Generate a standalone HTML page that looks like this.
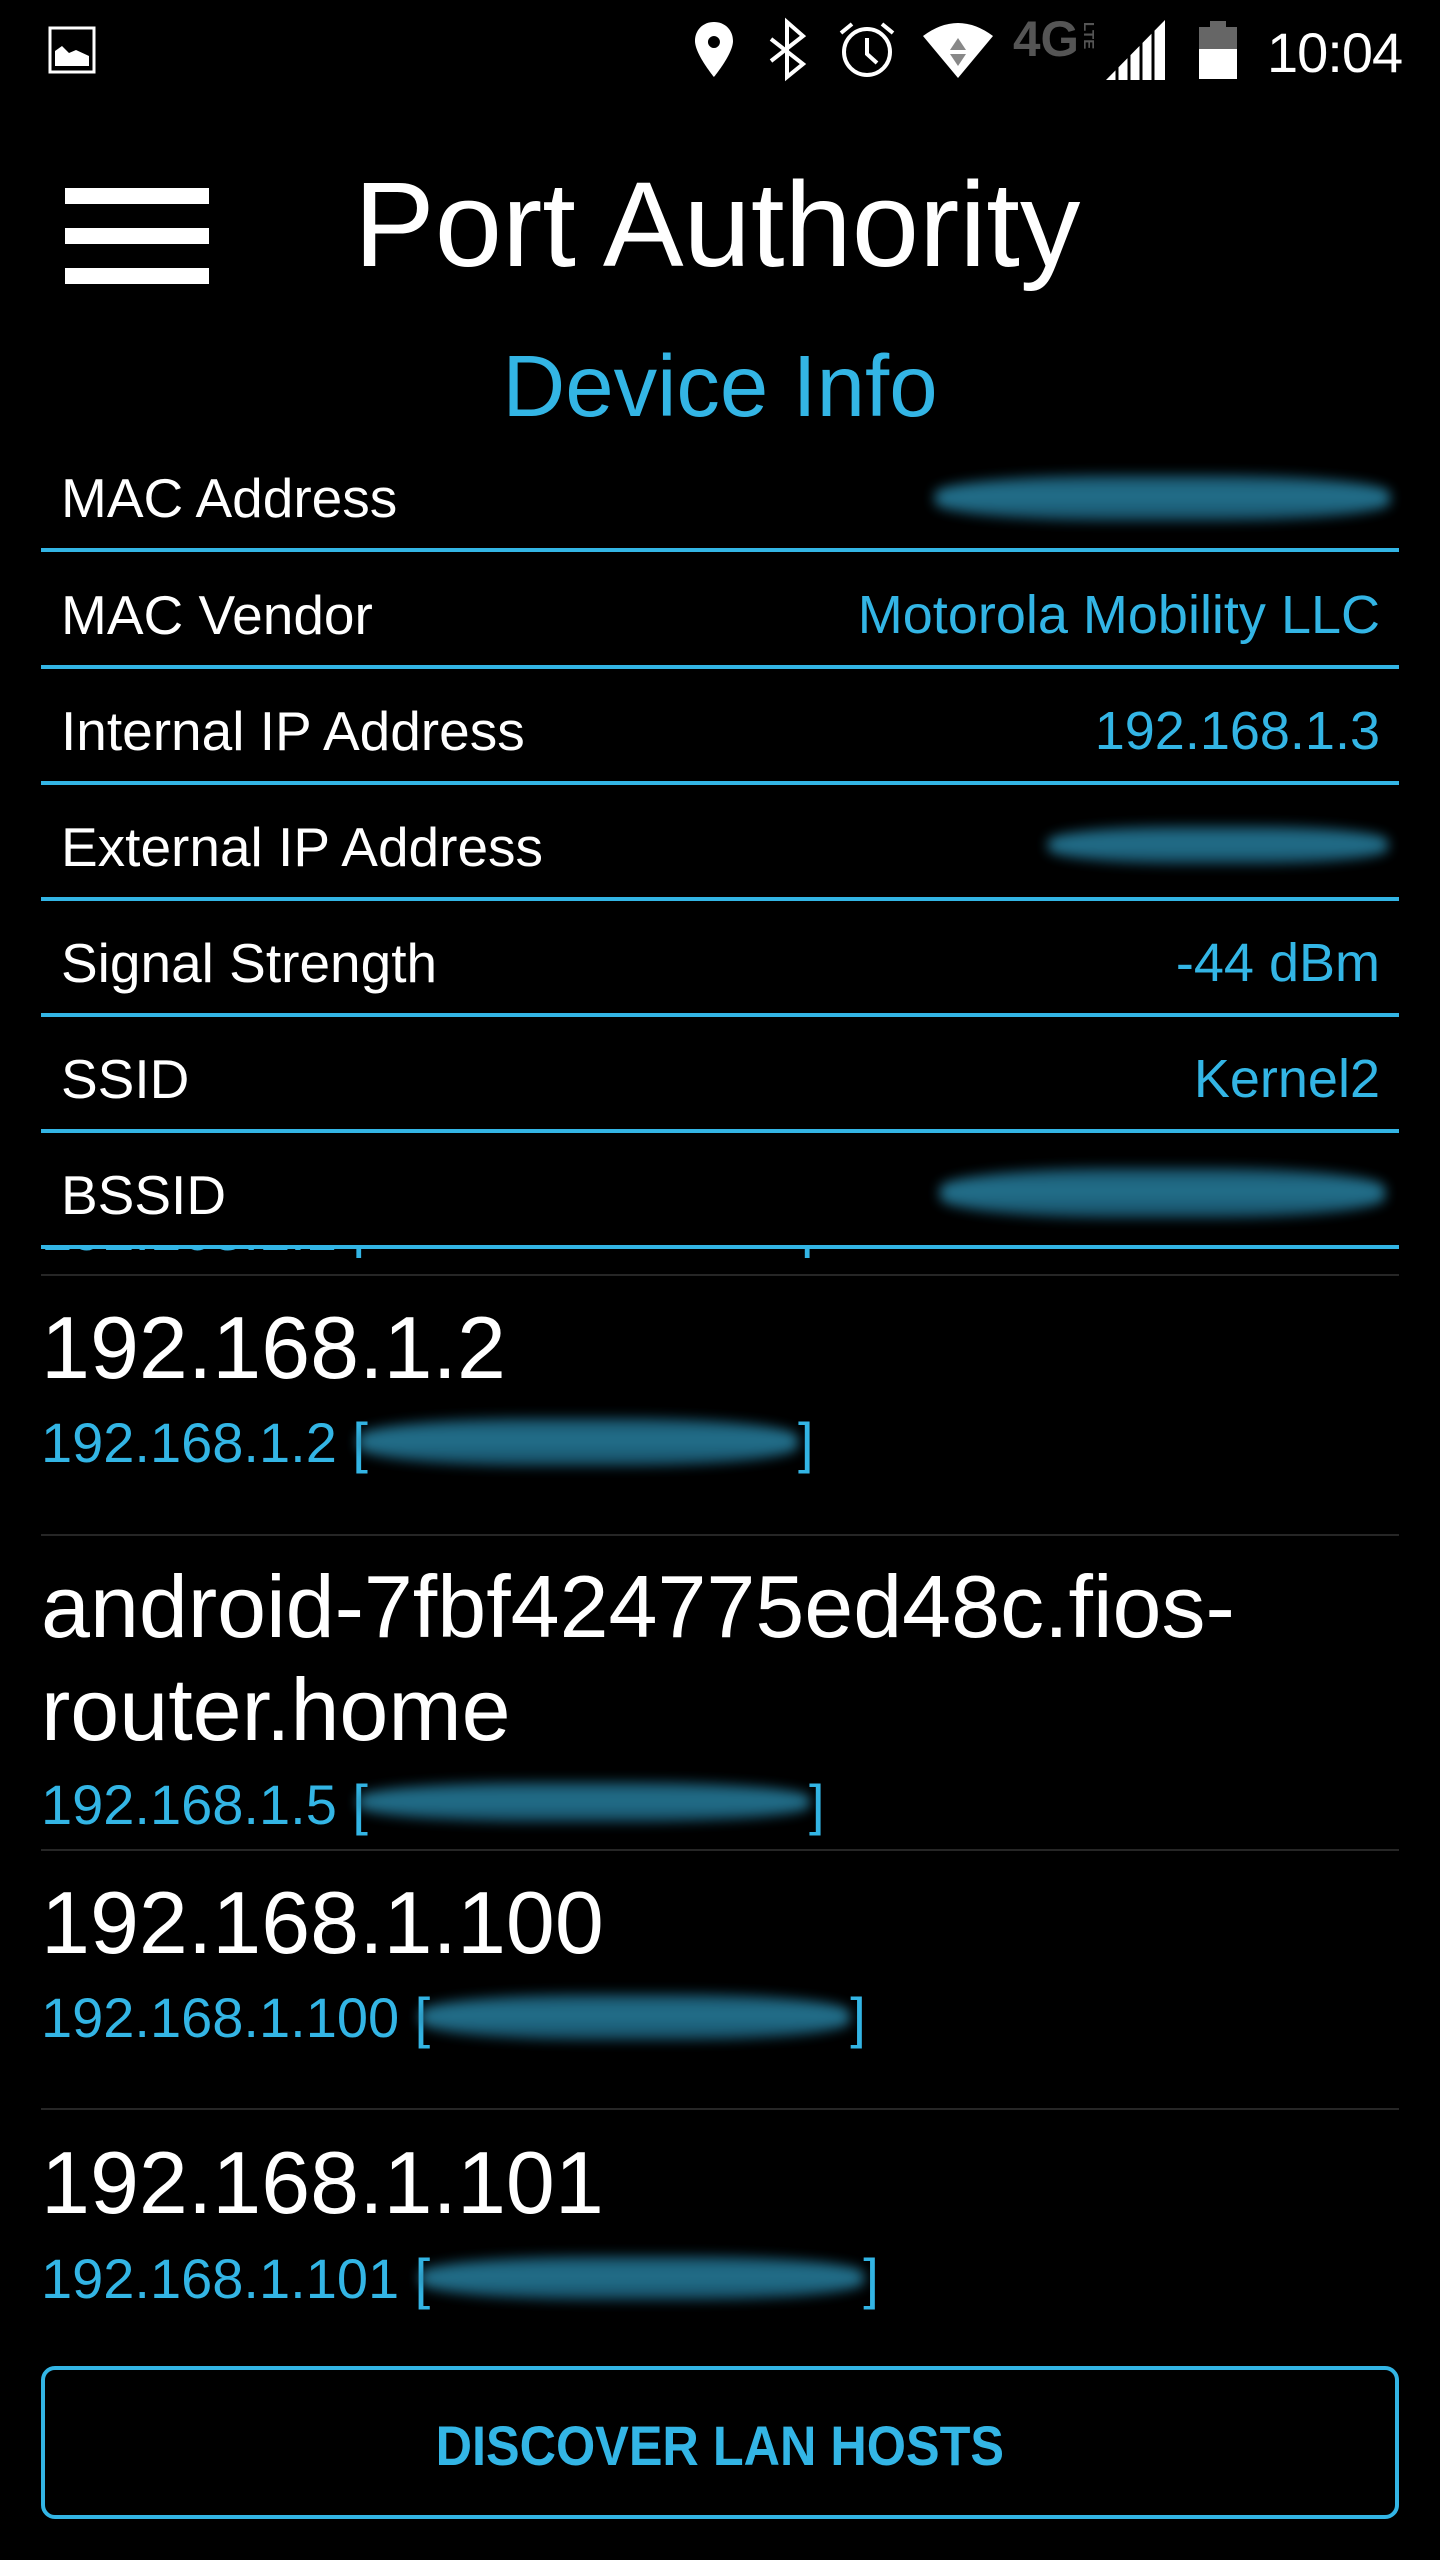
<!DOCTYPE html>
<html><head><meta charset="utf-8"><style>
*{margin:0;padding:0;box-sizing:border-box}
html,body{width:1440px;height:2560px;background:#000;overflow:hidden}
body{position:relative;font-family:"Liberation Sans",Arial,sans-serif;color:#fff}
.t{position:absolute;white-space:nowrap;line-height:1}
.b{color:#33b5e5}
.lbl{font-size:55px;left:61px}
.val{font-size:54px;right:60px;color:#33b5e5}
.line{position:absolute;left:41px;width:1358px;height:4px;background:#33b5e5}
.sep{position:absolute;left:41px;width:1358px;height:2px;background:#262626}
.host{font-size:88px;left:41px}
.sub{font-size:56px;left:41px;color:#33b5e5}
.blob{position:absolute;border-radius:40%;background:linear-gradient(180deg,#1c5f7a,#2a87a8 45%,#1a5a75);filter:blur(6px);opacity:.85}
</style></head><body>
<svg style="position:absolute;left:0;top:0" width="1440" height="120">
<rect x="50" y="28" width="44" height="44" fill="none" stroke="#fff" stroke-width="3"/>
<path d="M55 66 L55 51 L62 46 L69 53 L76 50 L89 56 L89 66 Z" fill="#fff"/>
<path d="M714 22 C703 22 695 30 695 41 C695 54 714 77 714 77 C714 77 733 54 733 41 C733 30 725 22 714 22 Z M714 36 A6 6 0 1 1 713.9 36 Z" fill="#fff" fill-rule="evenodd"/>
<path d="M771 39 L803 64 L787 77 L787 22 L803 36 L771 61" fill="none" stroke="#fff" stroke-width="4"/>
<circle cx="867" cy="52" r="23" fill="none" stroke="#fff" stroke-width="4"/>
<path d="M867 38 L867 54 L877 63" fill="none" stroke="#fff" stroke-width="4"/>
<path d="M841 33 L852 24 M893 33 L882 24" stroke="#fff" stroke-width="4"/>
<path d="M923 36 Q958 10 993 36 L958 78 Z" fill="#fff"/>
<path d="M958 38 L950 50 L966 50 Z M950 54 L966 54 L958 66 Z" fill="#888"/>
<text x="1013" y="56" font-family="Liberation Sans" font-weight="bold" font-size="50" fill="#555" textLength="66" lengthAdjust="spacingAndGlyphs">4G</text>
<text x="1084" y="22" font-family="Liberation Sans" font-weight="bold" font-size="15" fill="#555" transform="rotate(90 1084 22)">LTE</text>
<path d="M1106 80 L1165 20 L1165 80 Z" fill="#fff"/>
<path d="M1117 80 V66 M1129 80 V54 M1141 80 V42 M1153 80 V30" stroke="#000" stroke-width="3"/>
<rect x="1210" y="21" width="16" height="6" fill="#666"/>
<rect x="1199" y="27" width="38" height="22" fill="#666"/>
<rect x="1199" y="49" width="38" height="30" fill="#fff"/>
</svg>
<div class="t" style="left:1267px;top:25px;font-size:56px;letter-spacing:-1px">10:04</div>
<div style="position:absolute;left:65px;top:188px;width:144px;height:16px;background:#fff"></div>
<div style="position:absolute;left:65px;top:228px;width:144px;height:16px;background:#fff"></div>
<div style="position:absolute;left:65px;top:268px;width:144px;height:16px;background:#fff"></div>
<div class="t" style="left:354px;top:164px;font-size:121px">Port Authority</div>
<div class="t b" style="left:0;width:1440px;text-align:center;top:343px;font-size:87px">Device Info</div>
<div class="t lbl" style="top:471px">MAC Address</div>
<div class="blob" style="left:935px;top:475px;width:455px;height:46px"></div>
<div class="line" style="top:548px"></div>
<div class="t lbl" style="top:588px">MAC Vendor</div>
<div class="t val" style="top:588px">Motorola Mobility LLC</div>
<div class="line" style="top:665px"></div>
<div class="t lbl" style="top:704px">Internal IP Address</div>
<div class="t val" style="top:704px">192.168.1.3</div>
<div class="line" style="top:781px"></div>
<div class="t lbl" style="top:820px">External IP Address</div>
<div class="blob" style="left:1048px;top:826px;width:340px;height:38px"></div>
<div class="line" style="top:897px"></div>
<div class="t lbl" style="top:936px">Signal Strength</div>
<div class="t val" style="top:936px">-44 dBm</div>
<div class="line" style="top:1013px"></div>
<div class="t lbl" style="top:1052px">SSID</div>
<div class="t val" style="top:1052px">Kernel2</div>
<div class="line" style="top:1129px"></div>
<div class="t lbl" style="top:1168px">BSSID</div>
<div class="blob" style="left:940px;top:1168px;width:445px;height:50px"></div>
<div class="line" style="top:1245px"></div>
<div style="position:absolute;left:0;top:1249px;width:1440px;height:9px;overflow:hidden">
<div class="t sub" style="top:-46px">192.168.1.1 [<span style="display:inline-block;width:430px"></span>]</div>
</div>
<div class="sep" style="top:1274px"></div>
<div class="t host" style="top:1304px">192.168.1.2</div>
<div class="t sub" style="top:1415px">192.168.1.2 [<span style="display:inline-block;width:430px"></span>]</div>
<div class="blob" style="left:358px;top:1418px;width:440px;height:48px"></div>
<div class="sep" style="top:1534px"></div>
<div class="t host" style="top:1563px">android-7fbf424775ed48c.fios-</div>
<div class="t host" style="top:1666px">router.home</div>
<div class="t sub" style="top:1777px">192.168.1.5 [<span style="display:inline-block;width:441px"></span>]</div>
<div class="blob" style="left:358px;top:1782px;width:452px;height:40px"></div>
<div class="sep" style="top:1849px"></div>
<div class="t host" style="top:1879px">192.168.1.100</div>
<div class="t sub" style="top:1990px">192.168.1.100 [<span style="display:inline-block;width:420px"></span>]</div>
<div class="blob" style="left:420px;top:1994px;width:430px;height:46px"></div>
<div class="sep" style="top:2108px"></div>
<div class="t host" style="top:2139px">192.168.1.101</div>
<div class="t sub" style="top:2251px">192.168.1.101 [<span style="display:inline-block;width:433px"></span>]</div>
<div class="blob" style="left:420px;top:2256px;width:444px;height:44px"></div>
<div style="position:absolute;left:41px;top:2366px;width:1358px;height:153px;border:4px solid #33b5e5;border-radius:14px"></div>
<div class="t b" style="left:0;width:1440px;text-align:center;top:2418px;font-size:56px;font-weight:bold"><span style="display:inline-block;transform:scaleX(0.9)">DISCOVER LAN HOSTS</span></div>
</body></html>
